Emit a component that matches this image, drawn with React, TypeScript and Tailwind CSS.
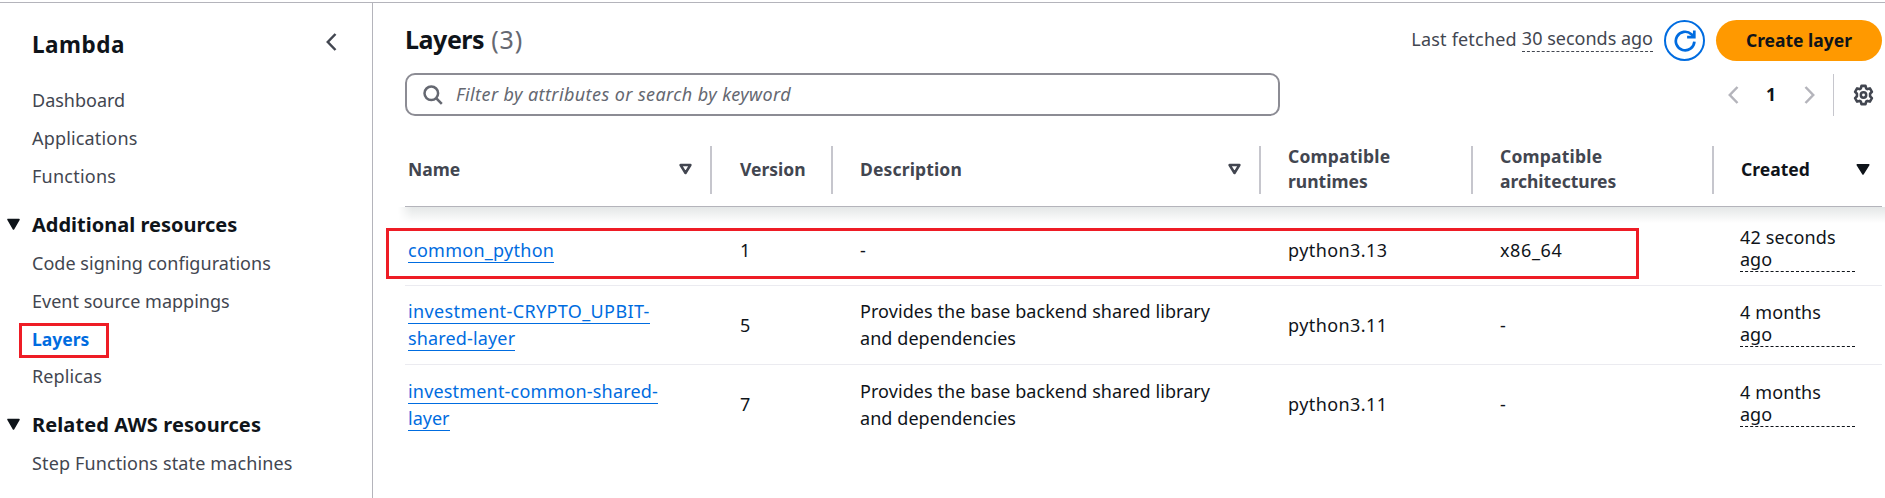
import React from 'react';

type Item = { label: string; tracking?: string; active?: boolean };

function NavItem({ label, tracking = '', active }: Item) {
  return (
    <li className={`relative h-[37.6px] leading-[38px] ${tracking} ${active ? 'text-[17.5px] font-bold text-[#006ce0]' : 'text-[#424650]'}`}>
      {label}
      {active && <span className="absolute -left-[13px] top-[3px] h-[35px] w-[90px] border-3 border-[#ee1c25]" />}
    </li>
  );
}

function NavSection({ title, tracking = '', items }: { title: string; tracking?: string; items: Item[] }) {
  return (
    <section className="mt-[10.6px]">
      <h3 className={`-ml-[25px] flex h-[39px] items-center text-[20px] font-bold leading-[38px] text-[#0f141a] ${tracking}`}>
        <svg className="mr-[12px] h-[13px] w-[13px]" viewBox="0 0 13 13">
          <path d="M1 1.5h11L6.5 11z" fill="#0f141a" stroke="#0f141a" strokeWidth="1.5" strokeLinejoin="round" />
        </svg>
        {title}
      </h3>
      <ul>
        {items.map((item) => (
          <NavItem key={item.label} {...item} />
        ))}
      </ul>
    </section>
  );
}

function Chevron({ dir, className }: { dir: 'left' | 'right'; className: string }) {
  return (
    <svg className={className} viewBox="0 0 11 18" fill="none" stroke="currentColor" strokeWidth="2.5">
      <path d={dir === 'left' ? 'M9.5 1L1.8 9l7.7 8' : 'M1.5 1l7.7 8-7.7 8'} />
    </svg>
  );
}

function SortIcon({ filled }: { filled?: boolean }) {
  return filled ? (
    <svg className="h-[13px] w-[14px] shrink-0" viewBox="0 0 14 13">
      <path d="M1.2 1.8h11.6L7 11z" fill="#0f141a" stroke="#0f141a" strokeWidth="1.5" strokeLinejoin="round" />
    </svg>
  ) : (
    <svg className="h-[13px] w-[13px] shrink-0" viewBox="0 0 13 13">
      <path d="M1.6 2h9.8L6.5 10z" fill="none" stroke="#424650" strokeWidth="2.5" strokeLinejoin="round" />
    </svg>
  );
}

const columns = 'grid grid-cols-[307px_121px_428px_212px_241px_168px]';

function HeaderCell({ children, className = '', divider = true }: { children: React.ReactNode; className?: string; divider?: boolean }) {
  return (
    <div className={`flex h-12 items-center justify-between pb-[2px] ${divider ? 'border-r-2 border-[#c6c6cd]' : ''} ${className}`}>
      {children}
    </div>
  );
}

function NameLink({ lines }: { lines: { text: string; tracking: string }[] }) {
  return (
    <a className="flex flex-col items-start text-[#006ce0]">
      {lines.map((l) => (
        <span key={l.text} className="flex h-[27px] items-start">
          <span className={`block h-[26px] whitespace-nowrap border-b border-[#006ce0] leading-[26px] ${l.tracking}`}>{l.text}</span>
        </span>
      ))}
    </a>
  );
}

const rows = [
  {
    name: [{ text: 'common_python', tracking: 'tracking-[0.27px]' }],
    version: '1',
    description: ['-'],
    runtime: 'python3.13',
    arch: 'x86_64',
    created: ['42 seconds', 'ago'],
    height: 'h-[79px] pt-[8px]',
  },
  {
    name: [
      { text: 'investment-CRYPTO_UPBIT-', tracking: 'tracking-[0.37px]' },
      { text: 'shared-layer', tracking: 'tracking-[0.15px]' },
    ],
    version: '5',
    description: ['Provides the base backend shared library', 'and dependencies'],
    runtime: 'python3.11',
    arch: '-',
    created: ['4 months', 'ago'],
    height: 'h-[79px]',
  },
  {
    name: [
      { text: 'investment-common-shared-', tracking: 'tracking-[0.18px]' },
      { text: 'layer', tracking: 'tracking-[0px]' },
    ],
    version: '7',
    description: ['Provides the base backend shared library', 'and dependencies'],
    runtime: 'python3.11',
    arch: '-',
    created: ['4 months', 'ago'],
    height: 'h-[79px]',
  },
];

export default function App() {
  return (
    <div className="flex h-[498px] w-[1885px] flex-col overflow-hidden bg-white pt-[2px] font-['Noto_Sans','Open_Sans',sans-serif] text-[18px] text-[#0f141a]">
      <div className="flex flex-1 border-t border-[#b4b4bb]">
        <aside className="w-[373px] shrink-0 border-r border-[#b4b4bb] pl-8">
          <div className="flex h-[78px] items-center justify-between pr-[35px]">
            <h2 className="mt-[5px] text-[22.5px] font-bold leading-[30px] tracking-[0.5px]">Lambda</h2>
            <Chevron dir="left" className="-mt-[1px] h-[18px] w-[11px] text-[#424650]" />
          </div>
          <ul className="pb-px">
            <NavItem label="Dashboard" />
            <NavItem label="Applications" tracking="tracking-[0.17px]" />
            <NavItem label="Functions" tracking="pt-[0.5px] tracking-[0.24px]" />
          </ul>
          <NavSection
            title="Additional resources"
            items={[
              { label: 'Code signing configurations', tracking: 'tracking-[0.04px]' },
              { label: 'Event source mappings', tracking: 'tracking-[0.02px]' },
              { label: 'Layers', active: true },
              { label: 'Replicas', tracking: 'tracking-[0.12px]' },
            ]}
          />
          <NavSection
            title="Related AWS resources"
            tracking="tracking-[0.1px]"
            items={[{ label: 'Step Functions state machines', tracking: 'tracking-[0.13px]' }]}
          />
        </aside>

        <main className="flex flex-1 flex-col pl-8 pr-[3px]">
          <div className="mt-[17px] flex h-[41px] items-center justify-between">
            <h1 className="mb-[4px] text-[25px] font-bold leading-[34px]">
              <span className="tracking-[-0.45px]">Layers</span>
              <span className="ml-[7px] font-normal tracking-[0.9px] text-[#656871]">(3)</span>
            </h1>
            <div className="flex items-center">
              <p className="mb-[2px] flex text-[#424650]">
                <span className="mr-[5px] tracking-[0.2px]">Last fetched</span>
                <span className="h-[26px] border-b border-dashed border-[#424650] leading-[25px]">30 seconds ago</span>
              </p>
              <button className="ml-[11px] flex h-[41px] w-[41px] items-center justify-center rounded-full border-2 border-[#006ce0] text-[#006ce0]">
                <svg className="h-[22px] w-[22px]" viewBox="0 0 22 22" fill="none" stroke="currentColor" strokeWidth="2.7">
                  <path d="M20.4 11.6a9.3 9.3 0 1 1-3-7.4l2.6 2.4" />
                  <path d="M20.3 0.5v6.7h-7.2" />
                </svg>
              </button>
              <button className="ml-[11px] h-[41px] w-[166px] rounded-full bg-[#ff9900] text-[17.5px] font-bold">Create layer</button>
            </div>
          </div>

          <div className="mt-[12px] flex h-[43px] items-center justify-between">
            <div className="flex h-[43px] w-[875px] items-center rounded-[10px] border-2 border-[#8c8c94] pl-[16px]">
              <svg className="h-[20px] w-[20px]" viewBox="0 0 20 20" fill="none" stroke="#656871" strokeWidth="2.5">
                <circle cx="8.3" cy="8.3" r="6.8" />
                <path d="M13 13l5.8 5.8" />
              </svg>
              <span className="ml-[13px] mb-px italic tracking-[0.41px] text-[#656871]">Filter by attributes or search by keyword</span>
            </div>
            <div className="flex h-full items-center">
              <Chevron dir="left" className="h-[18px] w-[11px] text-[#b4b4bb]" />
              <span className="ml-[27px] w-[11px] text-[17.5px] font-bold">1</span>
              <Chevron dir="right" className="ml-[27px] h-[18px] w-[11px] text-[#b4b4bb]" />
              <span className="ml-[18px] h-[42px] w-px bg-[#c6c6cd]" />
              <svg className="ml-[19px] mr-[8px] h-[22px] w-[21px]" viewBox="0 0 21 22" fill="none" stroke="#424650" strokeLinejoin="round">
                <path
                  strokeWidth="2.6"
                  d="M8.5 1.9h4l.6 2.4 1.3.8 2.5-.7 2 3.4-1.8 1.9v2.6l1.8 1.9-2 3.4-2.5-.7-1.3.8-.6 2.4h-4l-.6-2.4-1.3-.8-2.5.7-2-3.4 1.8-1.9V9.7L2.1 7.8l2-3.4 2.5.7 1.3-.8z"
                />
                <circle cx="10.5" cy="11" r="2.7" strokeWidth="2.5" />
              </svg>
            </div>
          </div>

          <div className={`relative mt-[18px] h-[73px] border-b border-[#b4b4bb] pt-[12px] text-[17.5px] font-bold text-[#424650] ${columns}`}>
            <HeaderCell className="pl-[3px] pr-[18px]">
              Name
              <SortIcon />
            </HeaderCell>
            <HeaderCell className="pl-[28px]">Version</HeaderCell>
            <HeaderCell className="pl-[27px] pr-[18px]">
              <span className="tracking-[0.15px]">Description</span>
              <SortIcon />
            </HeaderCell>
            <HeaderCell className="pl-[27px] leading-[25px]">
              <span>
                <span className="tracking-[0.2px]">Compatible</span>
                <br />
                runtimes
              </span>
            </HeaderCell>
            <HeaderCell className="pl-[27px] leading-[25px]">
              <span>
                <span className="tracking-[0.2px]">Compatible</span>
                <br />
                architectures
              </span>
            </HeaderCell>
            <HeaderCell divider={false} className="pl-[27px] pr-[12px] text-[#0f141a]">
              Created
              <SortIcon filled />
            </HeaderCell>
            <span className="absolute -left-[7px] -right-[3px] top-[73px] h-[16px] bg-linear-to-b from-[#e4e7e7] to-white [mask-image:linear-gradient(to_right,transparent,black_14px)]" />
          </div>

          <div className="relative">
            {rows.map((r, i) => (
              <div key={i} className={`${columns} items-center ${r.height} ${i < 2 ? 'border-b border-[#ebebf0]' : ''}`}>
                <div className="pl-[3px]">
                  <NameLink lines={r.name} />
                </div>
                <div className="pl-[28px]">{r.version}</div>
                <div className="pl-[27px] leading-[27px]">
                  {r.description.map((d) => (
                    <div key={d} className="tracking-[0.07px]">
                      {d}
                    </div>
                  ))}
                </div>
                <div className="pl-[27px] tracking-[0.42px]">{r.runtime}</div>
                <div className="pl-[27px] tracking-[0.6px]">{r.arch}</div>
                <div className="-mt-[2px] ml-[26px] w-[115px] border-b border-dashed border-[#0f141a] pb-px leading-[22px]">
                  <div className="tracking-[0.13px]">{r.created[0]}</div>
                  <div>{r.created[1]}</div>
                </div>
              </div>
            ))}
            <span className="absolute -left-[19px] top-[21px] h-[51px] w-[1253px] border-3 border-[#ee1c25]" />
          </div>
        </main>
      </div>
    </div>
  );
}
